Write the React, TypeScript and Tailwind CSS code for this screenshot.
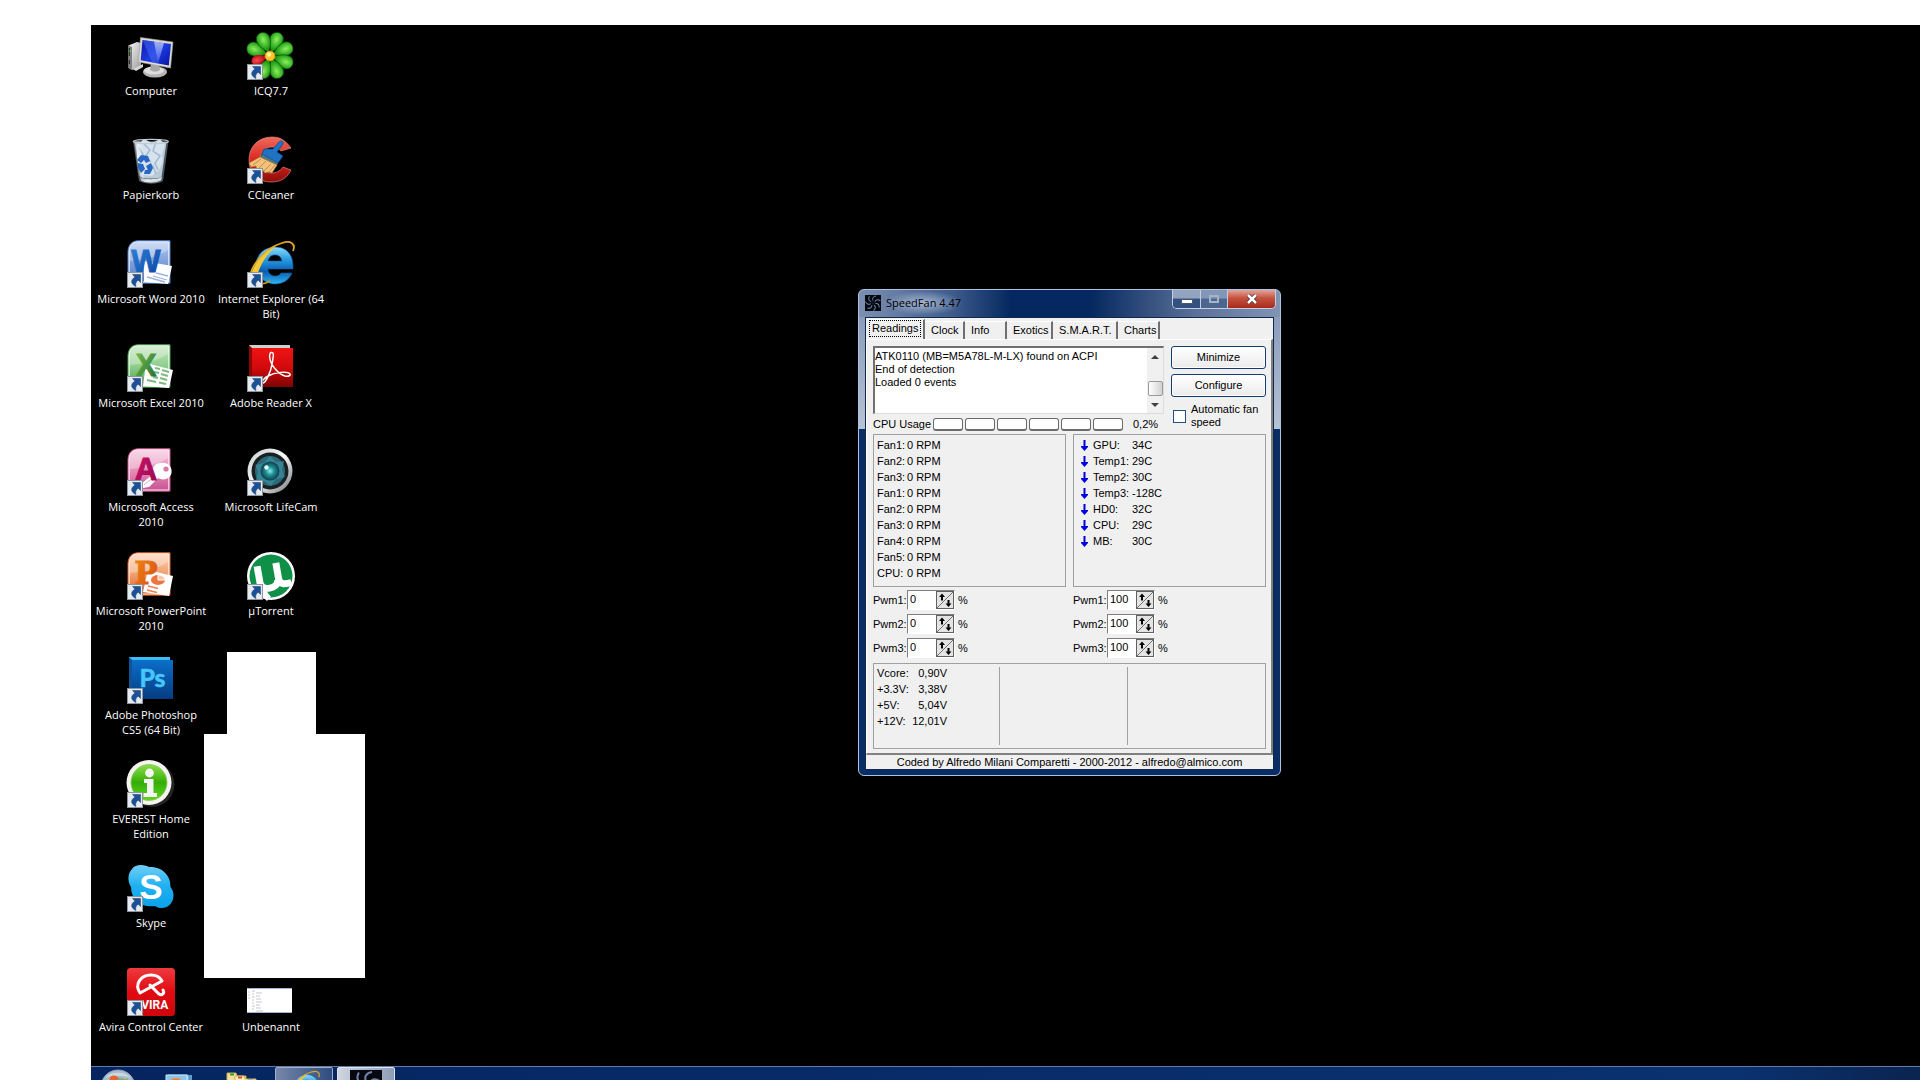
import { useState } from "react";
import type { ReactNode } from "react";

function Grad({ id, stops, x2 = 0, y2 = 1 }: { id: string; stops: string[]; x2?: number; y2?: number }) {
  return (
    <linearGradient id={id} x1="0" y1="0" x2={x2} y2={y2}>
      {stops.map((c, i) => (
        <stop key={i} offset={i / (stops.length - 1)} stopColor={c} />
      ))}
    </linearGradient>
  );
}

function Glyph({ children, shortcut = true }: { children: ReactNode; shortcut?: boolean }) {
  return (
    <svg viewBox="0 0 48 48" className="size-12 shrink-0 overflow-visible" aria-hidden="true">
      {children}
      {shortcut && (
        <g>
          <rect x="0.5" y="32.5" width="15" height="15" fill="#e6ebf0" stroke="#8e959c" />
          <path d="M5.500 34.500h8v8l-2.300-2.300c-2.400 1.600-3 3.800-2.200 6.300-5-2-6-6.500-1-9.500z" fill="#1d5195" stroke="#143c78" strokeWidth="0.5" />
        </g>
      )}
    </svg>
  );
}

const computer = (
  <Glyph shortcut={false}>
    <defs>
      <Grad id="scr" stops={["#0a17a8", "#1c3be0", "#0712a4"]} x2={1} />
      <Grad id="cs" stops={["#f7f7f7", "#9b9b9b"]} x2={1} />
      <Grad id="shine" stops={["#d0dcff", "#3a5cf0"]} />
    </defs>
    <path d="M1.500 13.500 10 10l4 1v24l-9 3-3.500-2z" fill="url(#cs)" />
    <path d="M1.500 13.500 5 15v23l-3.500-2z" fill="#7d7d7d" />
    <path d="M2.300 16v8M2.300 28v4" stroke="#202020" strokeWidth="1" />
    <circle cx="3.300" cy="19" r="1" fill="#3fe03f" />
    <path d="M6 37l10-5v3l-7 4z" fill="#d5d5d5" />
    <ellipse cx="28" cy="40" rx="12" ry="5.500" fill="#b5b5b5" />
    <ellipse cx="27" cy="38.500" rx="10" ry="4" fill="#dedede" />
    <path d="M24 31h8l1 7c-3 2-7 2-10 0z" fill="#a7a7a7" />
    <path d="M13.500 5.500 46 10 43.500 36 11.500 30z" fill="#dcdad2" stroke="#a2a29c" strokeWidth="0.6" />
    <path d="M15.500 8 44 12 41.800 33.500 13.700 28.300z" fill="url(#scr)" />
    <path d="M15.500 8 27 9.600 31 31.500 25 30.400z" fill="#4d6df5" opacity="0.5" />
    <path d="M27 9.600 37 11 31 31.500z" fill="url(#shine)" opacity="0.75" />
  </Glyph>
);

const bin = (
  <Glyph shortcut={false}>
    <defs><Grad id="bn" stops={["#8f9aa2", "#e9eff3", "#a9b6c0"]} x2={1} /></defs>
    <path d="M6 5 41.500 5 36 45c-5 3.500-18 3.500-24 0z" fill="#4d565c" />
    <path d="M8 6 39.500 6 34.500 41c-5 2-17 2-21 0z" fill="#b9cbd9" />
    <path d="M10 9l7-6 8 4 8-4 5 6-3 9 1 8-4 8-7 6-9-1-4-9-2-9z" fill="#d6e2ed" />
    <path d="M17 8l6 6-5 7 6 5M29 6l-3 9 7 5-5 7 3 7M20 34l6-4 3 8M12 12l5 8" stroke="#a2b9cf" strokeWidth="1.500" fill="none" />
    <path d="M7 5l6 0 4 37-5-2z" fill="#fff" opacity="0.35" />
    <path d="M10 24l4-5 7 1 2 5-4 2-2-3-3 3zM24 27l2 5-3 6-6 0 1-4 3 0-2-4zM14 37l-3-5 0-5 5 1 2 5z" fill="#2867c4" />
    <path d="M13 41c6 3 16 3 22 0l-1 3.500c-6 3-14 3-20 0z" fill="url(#bn)" />
    <ellipse cx="23.800" cy="5.500" rx="17.500" ry="2.200" fill="none" stroke="#c2cbd1" strokeWidth="1.200" />
  </Glyph>
);

function OfficeTile({ id, light, mid, dark, edge, letter, children, ink, font }: { id: string; light: string; mid: string; dark: string; edge: string; letter: string; children: ReactNode; ink: string[]; font: string }) {
  return (
    <Glyph>
      <defs>
        <Grad id={id + "bg"} stops={[light, mid, dark]} />
        <Grad id={id + "ink"} stops={ink} x2={1} />
      </defs>
      <path d="M11 .8H43V43.200H1V12C1 5 5 .8 11 .8z" fill={"url(#" + id + "bg)"} stroke={dark} strokeWidth="1" />
      <path d="M11 2H41.800V42H2.200V12C2.200 6 6 2 11 2z" fill="none" stroke={edge} strokeWidth="1" />
      <path d="M3 21C16 20 30 17 41 10V3H11C6 3 3 7 3 12z" fill="#fff" opacity="0.3" />
      {children}
      <text x="19" y="32" textAnchor="middle" fontFamily={font} fontWeight="700" fontSize="31" fill={"url(#" + id + "ink)"} stroke={"url(#" + id + "ink)"} strokeWidth="1">{letter}</text>
    </Glyph>
  );
}

const word = (
  <OfficeTile id="wd" font="Liberation Sans, sans-serif" light="#b9cdf0" mid="#7fa0dc" dark="#4f7cc8" edge="#f4f8ff" letter="W" ink={["#2b86d8", "#0b3fa0"]}>
    <path d="M17 21l28 5-4 18-24-2z" fill="#fff" />
    <path d="M29 33l12 3M26 36l14 4M20 37l18 5" stroke="#9fb2dd" strokeWidth="1.300" />
  </OfficeTile>
);
const excel = (
  <OfficeTile id="xl" font="Liberation Sans, sans-serif" light="#c7e6c3" mid="#8fce8c" dark="#48a04a" edge="#f0fff0" letter="X" ink={["#7cc04a", "#1a6a32"]}>
    <path d="M19 19l27 7-4 18-26-2z" fill="#fff" />
    <path d="M28 24l5 1M35 26l7 2M27 28l5 1M34 30l7 2M26 33l5 1M33 34l7 2M20 36l9 2M32 38.500l7 1.500" stroke="#7fb982" strokeWidth="2" />
  </OfficeTile>
);
const access = (
  <OfficeTile id="ac" font="Liberation Sans, sans-serif" light="#f5c9dd" mid="#e58fba" dark="#c94f90" edge="#fff0f7" letter="A" ink={["#d0146c", "#93064e"]}>
    <path d="M28 17c4-3 12-3 15 1 3 5 2 11-4 13-3 1-6 0-8-1L22 39l-6 1-2-4 12-10c-1-4 0-7 2-9z" fill="#fff" />
    <circle cx="39" cy="21" r="2.600" fill="#d979aa" />
    <path d="M17 37l11-9" stroke="#e6a9c8" strokeWidth="1" />
  </OfficeTile>
);
const powerpoint = (
  <OfficeTile id="pp" font="DejaVu Serif, serif" light="#fbd5b8" mid="#f0a070" dark="#dd5a26" edge="#fff4ea" letter="P" ink={["#f28a14", "#d04a12"]}>
    <path d="M21 18l25 6-4 20-26-4z" fill="#fff" />
    <ellipse cx="31" cy="28" rx="7" ry="5" fill="#ee7440" />
    <path d="M31 28l0-5c4 0 7 2 7 5z" fill="#fbc4a4" stroke="#fff" />
    <path d="M21 34l10 2.500M20 38l10 2.500" stroke="#ea8054" strokeWidth="1.700" />
  </OfficeTile>
);

const photoshop = (
  <Glyph>
    <defs><Grad id="ps" stops={["#0b6fc9", "#053c82"]} /></defs>
    <path d="M2 1h41v3H5v39l-3-3z" fill="#0d5598" />
    <path d="M2 1h41v3H5z" fill="#3cbcf5" />
    <rect x="5" y="4" width="41" height="39" fill="url(#ps)" />
    <text x="25.500" y="31" textAnchor="middle" fontFamily="Lato, sans-serif" fontWeight="700" fontSize="25" fill="#46c6fa" stroke="#46c6fa" strokeWidth="0.600">Ps</text>
  </Glyph>
);

const everest = (
  <Glyph>
    <defs><Grad id="ev" stops={["#8be04a", "#34ad08", "#5fd51c"]} /></defs>
    <circle cx="25" cy="24.500" r="22.500" fill="#242424" />
    <circle cx="22" cy="22.500" r="22.500" fill="#f3f5ee" />
    <circle cx="22" cy="22.500" r="18" fill="url(#ev)" stroke="#86c85c" strokeWidth="0.800" />
    <circle cx="22.500" cy="13" r="4.400" fill="#f4f4f4" />
    <path d="M17 19h9.500v14h3.500v4H16.500v-4H20V23h-3z" fill="#f4f4f4" />
  </Glyph>
);

const skype = (
  <Glyph>
    <defs><Grad id="sk" stops={["#6fd0f8", "#1fb0f0", "#0aa0ea"]} /></defs>
    <path d="M14 1c4 0 6 1 8 2 12-1 22 8 21.500 20 4 5 4 12 0 17-4 5-11 5-16 2C15 44 4 36 4 23 0 17 1 9 5 5c2-3 5-4 9-4z" fill="url(#sk)" />
    <text x="24" y="35" textAnchor="middle" fontFamily="Liberation Sans, sans-serif" fontWeight="bold" fontSize="35" fill="#fff">S</text>
  </Glyph>
);

const avira = (
  <Glyph>
    <defs><Grad id="av" stops={["#ee3a3e", "#e00b12", "#cf060c"]} /></defs>
    <rect width="48" height="48" rx="3.500" fill="url(#av)" />
    <path d="M13 25C7 16 14 7 24 7c5 0 9 2 11 6z" fill="none" stroke="#fff" strokeWidth="3" strokeLinejoin="round" />
    <path d="M23 17l9 9c3 2 6-1 4-4" fill="none" stroke="#fff" strokeWidth="3" strokeLinecap="round" />
    <text x="24" y="41" textAnchor="middle" fontFamily="Roboto, sans-serif" fontWeight="bold" fontSize="12" fill="#fff">AVIRA</text>
  </Glyph>
);

const icq = (
  <Glyph>
    <defs>
      <radialGradient id="pet" cx=".5" cy=".35"><stop offset="0" stopColor="#8df05e" /><stop offset="1" stopColor="#1a9a12" /></radialGradient>
      <radialGradient id="petr" cx=".5" cy=".35"><stop offset="0" stopColor="#f05050" /><stop offset="1" stopColor="#c00c18" /></radialGradient>
    </defs>
    {[22, 67, 112, 157, 202, 292, 337].map((a) => (
      <path key={a} d="M23 20C14 10 14 0 23-1c9 1 9 11 0 21z" fill="url(#pet)" stroke="#0c4a0a" strokeWidth="0.600" transform={"rotate(" + a + " 23 23.500)"} />
    ))}
    <path d="M23 20C16 12 17 5 23 4c6 1 7 8 0 16z" fill="url(#petr)" transform="rotate(250 23 23.500)" />
    <circle cx="23" cy="24" r="5" fill="#ffc52c" stroke="#e08a12" strokeWidth="0.800" />
    <circle cx="22" cy="22.500" r="2.300" fill="#fff0a0" />
  </Glyph>
);

const ccleaner = (
  <Glyph>
    <defs><Grad id="cc" stops={["#f06a5c", "#d8281f", "#8e0c0a"]} /></defs>
    <path d="M44 12C38 4 33 1 25 1 12 1 2 10 2 24s9 22 22 22c10 0 16-4 20-12l-8-3c-3 4-7 6-11 6-7 0-12-6-12-13s5-13 12-13c4 0 7 2 9 4z" fill="url(#cc)" stroke="#f49488" strokeWidth="0.600" />
    <path d="M32 6c2-2 5-1 4 2l-6 8 6 4-5 7-16-9 2-5 9 0z" fill="#1e73c4" stroke="#0d4483" strokeWidth="0.700" />
    <path d="M15 18l16 9-2 4-16-8z" fill="#4a7888" />
    <path d="M13 21l17 8-5 8-4-1-3 1-3-4-5 1-1-4-5 1-2-4z" fill="#f2c179" stroke="#a87838" strokeWidth="0.600" />
    <path d="M14 23l-8 6M19 25l-7 7M24 28l-7 7M28 29l-6 7" stroke="#b8823e" strokeWidth="0.800" />
  </Glyph>
);

const ieArt = (
  <>
    <defs><Grad id="ie" stops={["#8fdcfa", "#2a9be2", "#0a5cb0", "#30b5f0"]} /></defs>
    <path fillRule="evenodd" d="M46 26c0-12-7-19-18-19S9 15 9 25s8 19 19 19c8 0 14-4 17-11H34c-1 2-3 3-6 3-4 0-7-3-7-7h25zM21 21c1-4 3-6 7-6s6 2 7 6z" fill="url(#ie)" stroke="#0e5ca4" strokeWidth="0.600" />
    <path d="M4 41C0 30 16 9 35 3c9-3 14 1 11 8" fill="none" stroke="#e0a526" strokeWidth="1.800" />
    <path d="M4 41C2 30 14 13 29 6 19 15 11 28 10 38z" fill="#f4c838" />
    <path d="M10 41c3 4 8 3 13 0" fill="none" stroke="#d49b1a" strokeWidth="1.500" />
  </>
);
const ie = <Glyph>{ieArt}</Glyph>;

const reader = (
  <Glyph>
    <defs><Grad id="ar" stops={["#f01414", "#d20a0c", "#7e0404"]} /></defs>
    <path d="M2 1h41v3H5v39l-3-3z" fill="#8e0707" />
    <path d="M2 1h41v3H5z" fill="#cfcfcf" />
    <rect x="5" y="4" width="41" height="39" fill="url(#ar)" />
    <path d="M26 9c-3-2-4 2-3 6 1 6 8 15 15 17 4 1 6-1 5-2-2-3-15-2-22 2-4 2-7 6-5 7s8-11 9-19c1-5 2-10 1-11z" fill="none" stroke="#fff" strokeWidth="1.500" />
  </Glyph>
);

const lifecam = (
  <Glyph>
    <defs>
      <Grad id="lr" stops={["#c9cfd2", "#f8f8f8", "#6c7276"]} x2={1} />
      <radialGradient id="lc"><stop offset="0" stopColor="#86f0e8" /><stop offset=".45" stopColor="#1f8f96" /><stop offset="1" stopColor="#0e3c4c" /></radialGradient>
    </defs>
    <circle cx="23" cy="23" r="22.500" fill="url(#lr)" />
    <circle cx="23" cy="23" r="18.500" fill="#1b2023" />
    <circle cx="23" cy="23" r="15" fill="#2c6878" />
    <path d="M23 8l6 6 8-1-2 9 3 7-9 2-5 7-7-5-8-1 2-9-3-6 9-2z" fill="#3a8ea0" opacity="0.7" />
    <circle cx="23" cy="23" r="9.500" fill="url(#lc)" />
    <circle cx="19.500" cy="19.500" r="2.200" fill="#e2fffc" />
  </Glyph>
);

const utorrent = (
  <Glyph>
    <circle cx="24" cy="24" r="24" fill="#fff" />
    <circle cx="24" cy="24" r="21.500" fill="#0f8f48" />
    <g transform="rotate(-10 24 24)" fill="none" stroke="#fff">
      <path d="M12 12v17c0 9 17 9 18 0" strokeWidth="7" />
      <path d="M31 12v16c0 6 5 7 12 6" strokeWidth="7" />
      <path d="M13 30c0 7 1 11 5 16" strokeWidth="6" />
    </g>
  </Glyph>
);

const thumbnail = (
  <Glyph shortcut={false}>
    <rect y="20" width="45" height="25" fill="#fff" />
    <path d="M0 20.500h45M0 44.500h45" stroke="#9fb4d8" />
    <path d="M1 24h2M1 27h2M1 30h2M5 23h3M5 26h2M5 29h3M5 32h2M5 35h2M5 38h3M5 41h2M9 25h6M9 28h4M9 31h5M9 34h6M9 37h4M9 40h5M9 43h7" stroke="#b5b8be" strokeWidth="0.800" />
  </Glyph>
);

type Item = { label: string; icon: ReactNode; place?: string };
const items: Item[] = [
  { label: "Computer", icon: computer },
  { label: "Papierkorb", icon: bin },
  { label: "Microsoft Word 2010", icon: word },
  { label: "Microsoft Excel 2010", icon: excel },
  { label: "Microsoft Access 2010", icon: access },
  { label: "Microsoft PowerPoint 2010", icon: powerpoint },
  { label: "Adobe Photoshop CS5 (64 Bit)", icon: photoshop },
  { label: "EVEREST Home Edition", icon: everest },
  { label: "Skype", icon: skype },
  { label: "Avira Control Center", icon: avira },
  { label: "ICQ7.7", icon: icq },
  { label: "CCleaner", icon: ccleaner },
  { label: "Internet Explorer (64 Bit)", icon: ie },
  { label: "Adobe Reader X", icon: reader },
  { label: "Microsoft LifeCam", icon: lifecam },
  { label: "µTorrent", icon: utorrent },
  { label: "Unbenannt", icon: thumbnail, place: "col-start-2 row-start-10" },
];

function FanIcon({ className }: { className: string }) {
  return (
    <svg viewBox="0 0 16 16" className={className} aria-hidden="true">
      <rect width="16" height="16" fill="#05080f" />
      <g fill="none" stroke="#6f83a8" strokeWidth="1">
        {[0, 51, 103, 154, 206, 257, 309].map((a) => (
          <path key={a} d="M8 5.500C7 3.500 8 1.500 11 1" transform={"rotate(" + a + " 8 8)"} />
        ))}
      </g>
      <circle cx="8" cy="8" r="1.800" fill="#10182c" />
    </svg>
  );
}

const tabs = [
  { name: "Readings", width: "w-[58px]" },
  { name: "Clock", width: "w-10" },
  { name: "Info", width: "w-[42px]" },
  { name: "Exotics", width: "w-[46px]" },
  { name: "S.M.A.R.T.", width: "w-[65px]" },
  { name: "Charts", width: "w-[42px]" },
];
const fans = ["Fan1:", "Fan2:", "Fan3:", "Fan1:", "Fan2:", "Fan3:", "Fan4:", "Fan5:", "CPU:"];
const temps = [["GPU:", "34C"], ["Temp1:", "29C"], ["Temp2:", "30C"], ["Temp3:", "-128C"], ["HD0:", "32C"], ["CPU:", "29C"], ["MB:", "30C"]];
const volts = [["Vcore:", "0,90V"], ["+3.3V:", "3,38V"], ["+5V:", "5,04V"], ["+12V:", "12,01V"]];

function Pwm({ group, n, initial }: { group: string; n: number; initial: number }) {
  const [value, setValue] = useState(initial);
  const id = group + n;
  return (
    <div className="flex h-5 items-center">
      <label htmlFor={id} className="w-[34px] shrink-0">{"Pwm" + n + ":"}</label>
      <div className="flex h-5 w-12 border border-r-white border-b-white border-l-[#808080] border-t-[#808080] bg-white">
        <input id={id} value={value} onChange={(e) => setValue(Number(e.target.value) || 0)} className="h-4 w-7 min-w-0 bg-white pl-0.5 outline-none" />
        <div className="flex h-[18px] w-[18px] shrink-0 border border-[#606060] bg-[#e4e4e4]">
          <button type="button" aria-label={"Increase " + id} onClick={() => setValue(Math.min(100, value + 1))} className="w-2">
            <svg viewBox="0 0 8 16" className="h-4 w-2"><path d="M0 16 8 8" stroke="#707070" /><path d="M5 1.500 8 5H6v3.500H4V5H2z" fill="#000" /></svg>
          </button>
          <button type="button" aria-label={"Decrease " + id} onClick={() => setValue(Math.max(0, value - 1))} className="w-2">
            <svg viewBox="0 0 8 16" className="h-4 w-2"><path d="M0 8 8 0" stroke="#707070" /><path d="M3.500 15 .5 11.500h2V8h2v3.500h2z" fill="#000" /></svg>
          </button>
        </div>
      </div>
      <span className="ml-[3px]">%</span>
    </div>
  );
}

function SpeedFan() {
  const [tab, setTab] = useState("Readings");
  return (
    <section
      aria-label="SpeedFan 4.47"
      className="absolute top-[264px] left-[767px] w-[423px] rounded-md border border-[#a9c4e2] bg-[linear-gradient(180deg,#7f93b4,#b7c3d6_139px,#0a2d66_139px)] px-1.5 pb-[5px] font-['Liberation_Sans',Arial,sans-serif] text-[11px] leading-[13px] text-black"
    >
      <header className="-mx-1.5 flex h-[27px] items-start justify-between rounded-t-md bg-[linear-gradient(90deg,#7d90b2,#3f5c8c_22%,#04285f_36%,#04285f_55%,#5c7199_80%,#8194b4)] pr-1 pl-1.5">
        <div className="flex h-[26px] items-center gap-[3px]">
          <FanIcon className="size-4" />
          <h1 className="bg-[radial-gradient(closest-side,rgba(200,212,232,0.7),rgba(200,212,232,0))] px-0.5 font-['Open_Sans','Noto_Sans',sans-serif] text-[11px] leading-6">SpeedFan 4.47</h1>
        </div>
        <div className="flex h-[19px] overflow-hidden rounded-b-[5px] border border-t-0 border-[#c3d0e4]">
          <button type="button" aria-label="Minimize window" className="flex w-7 items-center justify-center border-r border-[#c3d0e4] bg-linear-to-b from-[#93a4c0] from-45% to-[#33507f] to-50%">
            <span className="mt-1 h-[5px] w-3 rounded-[1px] border border-[#4a5770] bg-white" />
          </button>
          <button type="button" aria-label="Maximize window" disabled className="flex w-[27px] items-center justify-center border-r border-[#c3d0e4] bg-linear-to-b from-[#8496b6] from-45% to-[#4d6690] to-50%">
            <span className="h-2 w-2.5 border-2 border-[#a6b4ca]" />
          </button>
          <button type="button" aria-label="Close window" className="flex w-[47px] items-center justify-center bg-linear-to-b from-[#e0a59c] via-[#c4523f] via-45% to-[#a8291a]">
            <svg viewBox="0 0 12 10" className="h-2.5 w-3"><path d="M2 1l8 8M10 1 2 9" stroke="#4b2a2a" strokeWidth="4" /><path d="M2 1l8 8M10 1 2 9" stroke="#fff" strokeWidth="2.500" /></svg>
          </button>
        </div>
      </header>
      <div className="border border-[#10284c] bg-[#f0f0f0] pt-px">
        <div role="tablist" className="flex h-5 items-end pl-px">
          {tabs.map((t) => (
            <button
              key={t.name}
              type="button"
              role="tab"
              aria-selected={tab === t.name}
              onClick={() => setTab(t.name)}
              className={(tab === t.name ? "h-5 pb-[3px] pl-[5px] " : "h-[18px] pb-px pl-1.5 ") + "relative shrink-0 border-t border-r-2 border-t-white border-r-[#707070] text-left whitespace-nowrap " + t.width}
            >
              {tab === t.name && <span className="absolute inset-x-0.5 top-0 bottom-0.5 border border-dotted border-black" />}
              {t.name}
            </button>
          ))}
        </div>
        <div className="border-t border-r-2 border-b-2 border-l border-white border-r-[#808080] border-b-[#808080] pt-1.5 pr-[5px] pb-1 pl-1.5">
          <div className="flex justify-between">
            <div className="flex h-[68px] w-[291px] border-t-2 border-r border-b border-l-2 border-t-[#707070] border-r-[#dcdcdc] border-b-[#dcdcdc] border-l-[#707070] bg-white">
              <textarea
                readOnly
                aria-label="Detection log"
                className="min-w-0 flex-1 resize-none overflow-hidden pt-0.5 whitespace-pre outline-none"
                value={"ATK0110 (MB=M5A78L-M-LX) found on ACPI\nEnd of detection\nLoaded 0 events"}
              />
              <div className="flex w-4 flex-col items-center justify-between bg-[#f0f0f0]">
                <button type="button" aria-label="Scroll up" className="flex h-[17px] w-full items-center justify-center"><svg viewBox="0 0 8 4" className="h-1 w-2"><path d="M0 4 4 0l4 4z" fill="#404040" /></svg></button>
                <div className="mt-[15px] h-[15px] w-[15px] rounded-[2px] border border-[#999] bg-linear-to-r from-white to-[#d2d2d2]" />
                <button type="button" aria-label="Scroll down" className="flex h-[17px] w-full items-center justify-center"><svg viewBox="0 0 8 4" className="h-1 w-2"><path d="M0 0h8L4 4z" fill="#404040" /></svg></button>
              </div>
            </div>
            <div className="flex w-[95px] flex-col gap-[5px]">
              {["Minimize", "Configure"].map((b) => (
                <button key={b} type="button" className="h-[23px] rounded-[3px] border border-[#123c72] bg-linear-to-b from-white to-[#ebebeb] shadow-[inset_0_0_0_1px_#ffffff]">{b}</button>
              ))}
              <label className="mt-px flex items-center gap-[5px] pl-0.5">
                <input type="checkbox" className="size-[13px] shrink-0 appearance-none border border-[#24507f] bg-white checked:bg-[#24507f]" />
                <span>Automatic fan speed</span>
              </label>
            </div>
          </div>
          <div className="-mt-[11px] flex h-[13px] items-center">
            <span className="w-[60px]">CPU Usage</span>
            <div className="flex gap-0.5" role="img" aria-label="CPU usage bar">
              {[0, 1, 2, 3, 4, 5].map((i) => (
                <span key={i} className="h-[13px] w-[30px] rounded-[3px] border border-b-2 border-[#6c6c6c] bg-white" />
              ))}
            </div>
            <span className="ml-2.5">0,2%</span>
          </div>
          <div className="mt-[3px] grid grid-cols-2 gap-[7px]">
            <div className="h-[153px] border border-[#a0a0a0] pt-0.5 pl-[3px]">
              <table><tbody>
                {fans.map((f, i) => (
                  <tr key={i} className="h-4"><th scope="row" className="w-[30px] p-0 text-left font-normal">{f}</th><td className="p-0 whitespace-nowrap">0 RPM</td></tr>
                ))}
              </tbody></table>
            </div>
            <div className="h-[153px] border border-[#a0a0a0] pt-0.5 pl-[7px]">
              <table><tbody>
                {temps.map(([k, v]) => (
                  <tr key={k} className="h-4">
                    <td className="w-3 p-0"><svg viewBox="0 0 7 13" className="h-[13px] w-[7px]"><path d="M2.500 1h2v6H7v1L3.500 12 0 8V7h2.500z" fill="#0000dc" /></svg></td>
                    <th scope="row" className="w-[39px] p-0 text-left font-normal">{k}</th>
                    <td className="p-0">{v}</td>
                  </tr>
                ))}
              </tbody></table>
            </div>
          </div>
          <div className="mt-[3px] grid grid-cols-2 gap-x-[7px]">
            {[{ g: "left", v: 0 }, { g: "right", v: 100 }].map(({ g, v }) => (
              <div key={g} className="flex flex-col gap-1">
                {[1, 2, 3].map((n) => <Pwm key={n} group={g} n={n} initial={v} />)}
              </div>
            ))}
          </div>
          <div className="mt-[5px] flex h-[86px] border border-[#a0a0a0]">
            <div className="w-[125px] pt-px pl-[3px]">
              <table className="w-[70px]"><tbody>
                {volts.map(([k, v]) => (
                  <tr key={k} className="h-4"><th scope="row" className="p-0 text-left font-normal">{k}</th><td className="p-0 text-right">{v}</td></tr>
                ))}
              </tbody></table>
            </div>
            <div className="my-[3px] w-[129px] border-x border-[#a0a0a0]" />
          </div>
        </div>
        <footer className="h-[14px] pt-px text-center">Coded by Alfredo Milani Comparetti - 2000-2012 - alfredo@almico.com</footer>
      </div>
    </section>
  );
}

function Taskbar() {
  return (
    <nav aria-label="Taskbar" className="relative h-3.5 shrink-0 overflow-hidden border-t border-[#5f7ba6] bg-linear-to-r from-[#062560] via-[#0a3270] via-90% to-[#0a2450]">
      <div className="flex h-10 items-center">
        <button type="button" aria-label="Start" className="ml-[9px] size-9">
          <svg viewBox="0 0 36 36" className="size-9">
            <defs><radialGradient id="orb" cx=".5" cy=".7"><stop offset="0" stopColor="#2d78b8" /><stop offset=".7" stopColor="#38618f" /><stop offset="1" stopColor="#a9bccb" /></radialGradient></defs>
            <circle cx="18" cy="18" r="17" fill="url(#orb)" stroke="#8ea6bf" />
            <path d="M5 9C11 2 25 2 31 9 24 6 12 6 5 9z" fill="#dbe5ee" opacity="0.7" />
            <path d="M10 8c3-2 5-2 8 0l-1 9c-3-1.500-5-1.500-8 0z" fill="#e8642c" />
            <path d="M19 9c3 2 6 2 9 0l-1 8c-3 2-6 2-9 0z" fill="#86b83c" />
            <path d="M8 19c3-1.500 5-1.500 8 0l-1 8c-3-1.500-5-1.500-8 0z" fill="#3e86d8" />
            <path d="M18 19c3 1.500 6 1.500 8 0l-1 8c-3 2-5 2-8 0z" fill="#f4c430" />
          </svg>
        </button>
        <button type="button" aria-label="Media Player" className="ml-[26px] size-8">
          <svg viewBox="0 0 32 32" className="size-8"><path d="M8 4h22v24H8z" fill="#5f9fd0" /><path d="M6 4h21v24H6z" fill="#a6d2ee" stroke="#4f8cc0" /><path d="M4 4h21v24H4z" fill="#8ec4e8" stroke="#c9e6f8" /><circle cx="14" cy="15" r="8" fill="#f0842c" /><circle cx="14" cy="14" r="5" fill="#f8a85c" /><path d="M12 11l6 4-6 4z" fill="#fff" /></svg>
        </button>
        <button type="button" aria-label="Explorer" className="ml-[31px] size-8">
          <svg viewBox="0 0 32 32" className="size-8"><path d="M2 2h9l1 3h9v23H2z" fill="#f4e09a" stroke="#c9a74c" /><path d="M10 5h9l1 3h11v20H10z" fill="#fbeeb4" stroke="#d0b25c" /><path d="M5 3.500h4" stroke="#2d9a3c" strokeWidth="2" /><path d="M13 6.500h4" stroke="#d8483c" strokeWidth="2" /><path d="M23 9.500h5" stroke="#5fa0d8" strokeWidth="2" /></svg>
        </button>
        <button type="button" aria-label="Internet Explorer" className="ml-[18px] flex h-10 w-[58px] justify-center rounded-[2px] border border-[#9fb0cb] bg-linear-to-r from-[#7787a8] to-[#2e4c7e] pt-0.5">
          <svg viewBox="0 0 48 48" className="size-8">{ieArt}</svg>
        </button>
        <button type="button" aria-label="SpeedFan" className="ml-1 flex h-10 w-[58px] justify-center rounded-[2px] border border-[#dfe5ee] bg-linear-to-r from-[#cfd5e0] to-[#8f9db6] pt-0.5">
          <FanIcon className="size-8" />
        </button>
      </div>
    </nav>
  );
}

export default function App() {
  return (
    <div className="flex h-screen flex-col overflow-hidden bg-white pt-[25px] pl-[91px]">
      <main className="relative min-h-0 flex-1 overflow-hidden bg-black">
        <div className="grid w-60 grid-flow-col grid-cols-2 grid-rows-[repeat(10,104px)] pt-[7px]">
          {items.map((it) => (
            <a key={it.label} href="#" className={"flex flex-col items-center gap-[3px] px-1 text-center font-['Open_Sans','Noto_Sans',sans-serif] text-[11px] leading-[15px] text-white " + (it.place ?? "")}>
              {it.icon}
              <span>{it.label}</span>
            </a>
          ))}
        </div>
        <div className="absolute top-[627px] left-[136px] h-[82px] w-[89px] bg-white" />
        <div className="absolute top-[709px] left-[113px] h-[244px] w-[161px] bg-white" />
        <SpeedFan />
      </main>
      <Taskbar />
    </div>
  );
}
